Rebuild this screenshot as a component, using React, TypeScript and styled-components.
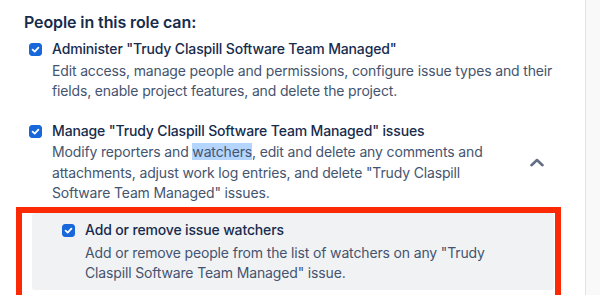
import * as React from 'react';
import styled, { createGlobalStyle } from 'styled-components';

const GlobalStyle = createGlobalStyle`
  html, body {
    margin: 0;
    padding: 0;
    background: #ffffff;
  }
  body {
    font-family: Inter, "Noto Sans", sans-serif;
    -webkit-font-smoothing: antialiased;
  }
`;

const Page = styled.div`
  display: flex;
  width: 600px;
  height: 295px;
  overflow: hidden;
`;

const Content = styled.div`
  flex: 1;
  padding: 10px 0 0 0;
`;

const Scrollbar = styled.div`
  width: 14px;
  height: 295px;
  background: #f9f9f9;
  border-left: 1px solid #e3e3e3;
`;

const Heading = styled.h2`
  margin: 0 0 5px 24px;
  font-size: 16px;
  line-height: 24px;
  font-weight: 600;
  letter-spacing: -0.1px;
  color: #172b4d;
`;

const List = styled.div`
  display: flex;
  flex-direction: column;
  gap: 19px;
  padding-left: 29px;
  padding-right: 24px;
`;

const Row = styled.div<{ $nested?: boolean }>`
  display: flex;
  align-items: flex-start;
  gap: 10px;
  ${({ $nested }) => ($nested ? 'padding: 7px 50px 6px 30px;' : '')}
`;

const CheckBox = styled.svg`
  flex: none;
  width: 13px;
  height: 13px;
  margin-top: 4px;
`;

const TextBlock = styled.div<{ $nested?: boolean }>`
  flex: 1;
  display: flex;
  flex-direction: column;
  gap: ${({ $nested }) => ($nested ? '3px' : '1.5px')};
`;

const Title = styled.div`
  font-size: 14px;
  line-height: 20px;
  font-weight: 500;
  letter-spacing: -0.15px;
  color: #172b4d;
`;

const Description = styled.div`
  font-size: 14px;
  line-height: 20.5px;
  letter-spacing: -0.15px;
  color: #44546f;
`;

const Selected = styled.span`
  background: #b4d5fe;
`;

const Action = styled.div`
  flex: none;
  align-self: center;
  width: 32px;
  height: 32px;
  margin-right: 8px;
  display: flex;
  align-items: center;
  justify-content: center;
`;

const Highlight = styled.div`
  margin: 3px 24px 0 16px;
  border: 6px solid #fb2a05;
  border-bottom: none;
  padding: 0 1px 6px 10px;
`;

const SubPanel = styled.div`
  background: #f1f2f4;
  border-radius: 3px;
`;

interface Permission {
  id: string;
  title: string;
  description: React.ReactNode;
  expandable?: boolean;
}

const permissions: Permission[] = [
  {
    id: 'administer',
    title: 'Administer "Trudy Claspill Software Team Managed"',
    description:
      'Edit access, manage people and permissions, configure issue types and their fields, enable project features, and delete the project.',
  },
  {
    id: 'manage',
    title: 'Manage "Trudy Claspill Software Team Managed" issues',
    description: (
      <>
        Modify reporters and <Selected>watchers</Selected>, edit and delete any comments and
        attachments, adjust work log entries, and delete "Trudy Claspill Software Team Managed"
        issues.
      </>
    ),
    expandable: true,
  },
];

const CheckIcon: React.FC = () => (
  <CheckBox viewBox="0 0 13 13" aria-hidden>
    <rect x="0.5" y="0.5" width="12" height="12" rx="2.5" fill="#1868db" stroke="#1868db" />
    <path d="M3.6 6.7 L5.7 8.6 L9.4 4.6" fill="none" stroke="#ffffff" strokeWidth="1.8" strokeLinecap="round" strokeLinejoin="round" />
  </CheckBox>
);

const ChevronUp: React.FC = () => (
  <svg width="16" height="10" viewBox="0 0 16 10" aria-hidden>
    <path d="M2.5 8.2 L8 3 L13.5 8.2" fill="none" stroke="#626f86" strokeWidth="2.6" strokeLinecap="round" strokeLinejoin="round" />
  </svg>
);

const PermissionRow: React.FC<{ item: Permission }> = ({ item }) => (
  <Row>
    <CheckIcon />
    <TextBlock>
      <Title>{item.title}</Title>
      <Description>{item.description}</Description>
    </TextBlock>
    {item.expandable && (
      <Action>
        <ChevronUp />
      </Action>
    )}
  </Row>
);

const App: React.FC = () => (
  <>
    <GlobalStyle />
    <Page>
      <Content>
        <Heading>People in this role can:</Heading>
        <List>
          {permissions.map((p) => (
            <PermissionRow item={p} key={p.id} />
          ))}
        </List>
        <Highlight>
          <SubPanel>
            <Row $nested>
              <CheckIcon />
              <TextBlock $nested>
                <Title>Add or remove issue watchers</Title>
                <Description>
                  Add or remove people from the list of watchers on any "Trudy Claspill Software
                  Team Managed" issue.
                </Description>
              </TextBlock>
            </Row>
          </SubPanel>
        </Highlight>
      </Content>
      <Scrollbar />
    </Page>
  </>
);

export default App;
